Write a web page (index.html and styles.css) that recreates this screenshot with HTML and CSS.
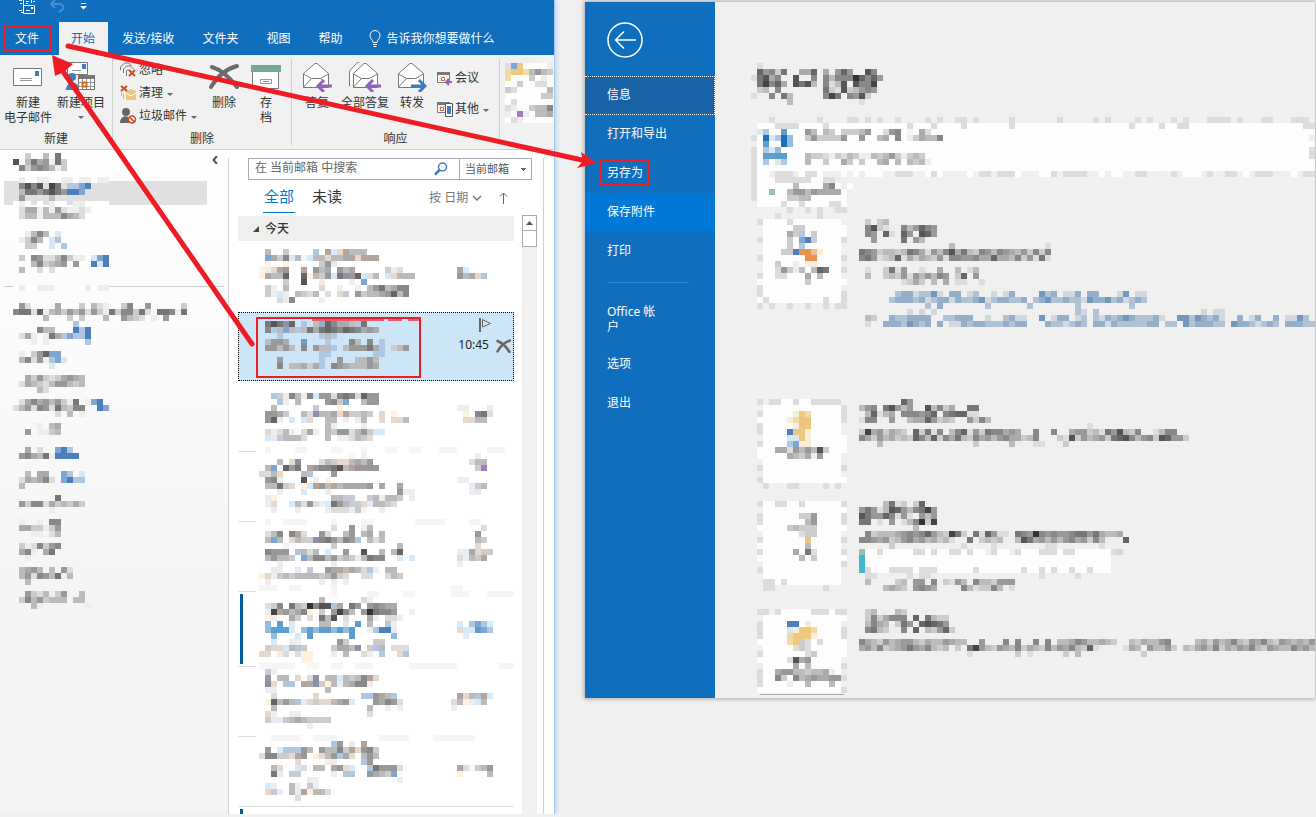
FILE: index.html
```html
<!DOCTYPE html>
<html lang="zh-CN">
<head>
<meta charset="utf-8">
<title>Outlook</title>
<link rel="stylesheet" href="styles.css">
</head>
<body>
<div class="desktop">
  <section class="window outlook">
    <header class="titlebar">
      <div class="quick">
        <button class="plain" aria-label="发送/接收所有文件夹"><svg width="18" height="14" viewBox="0 0 18 14" fill="none" stroke="#fff"><path d="M5.500 6.500V-1M1 .5h3M2 3.500h2M3 12.500h2M1 10.500h3M13.500-1v4M5.500 5.500h11v8h-11zM8 10.500h4M8 1.500h3M8 3.500h2M15 1.500h2"/><path d="M13 7h2v2h-2z" fill="#fff" stroke="none"/></svg></button>
        <button class="plain" aria-label="撤消"><svg width="16" height="14" viewBox="0 0 16 14" fill="none" stroke="#4690d2" stroke-width="2"><path d="M1 4h8c4 0 5 3 4 5l-4 3M5 0L1 4l4 4"/></svg></button>
        <button class="plain" aria-label="自定义"><svg width="8" height="14" viewBox="0 0 8 14"><path d="M1 3h5v1H1zM0 6h7L3.500 9.500z" fill="#fff"/></svg></button>
      </div>
      <nav class="tabs">
        <button class="tab file">文件</button>
        <button class="tab active">开始</button>
        <button class="tab">发送/接收</button>
        <button class="tab">文件夹</button>
        <button class="tab">视图</button>
        <button class="tab">帮助</button>
        <button class="tab tell"><svg width="12" height="18" viewBox="0 0 12 18" fill="none" stroke="#fff"><path d="M4 12.500c0-3-3-3.500-3-7a5 5 0 0 1 10 0c0 3.500-3 4-3 7zM4 14.500h4M4.500 16.500h3"/></svg>告诉我你想要做什么</button>
      </nav>
    </header>

    <div class="ribbon">
      <div class="group g-new">
        <div class="tools">
          <button class="big wide"><svg width="30" height="30" viewBox="0 0 30 30"><path d="M.5 6.500h28v17H.5z" fill="#fff" stroke="#777"/><path d="M22 9h4v5h-4z" fill="#3f7cbc"/><path d="M7 16.500h12M7 18.500h12" stroke="#999"/></svg>新建<br>电子邮件</button>
          <button class="big"><svg width="30" height="30" viewBox="0 0 30 30"><path d="M1.500.5h20v12h-20z" fill="#fff" stroke="#777"/><path d="M16 2h4v5h-4z" fill="#3f7cbc"/><path d="M6 8.500h9" stroke="#999"/><circle cx="6" cy="15" r="4" fill="#3f7cbc"/><path d="M0 28c0-10 13-10 13 0z" fill="#3f7cbc"/><path d="M12.500 13.500h16v14h-16z" fill="#fff" stroke="#777"/><path d="M12 13h17v4H12z" fill="#777"/><path d="M13 20.500h15M13 24.500h15M16.500 17v10M20.500 17v10M24.500 17v10" stroke="#999"/><path d="M16.500 20.500h4v4h-4z" fill="#fff" stroke="#d8661c" stroke-width="2"/></svg>新建项目<i class="caret"></i></button>
        </div>
        <span class="caption">新建</span>
      </div>
      <div class="group g-del">
        <div class="tools">
          <div class="smalls">
            <button class="small"><svg width="17" height="16" viewBox="0 0 17 16" fill="none" stroke="#777"><path d="M.5 8V5l4-4h4l3 3M3.500 11V7l3-3h4l3 3M6.500 14V9l2-2"/><path d="M9 8l6 6M15 8l-6 6" stroke="#cf4b2a" stroke-width="2"/></svg>忽略</button>
            <button class="small"><svg width="17" height="16" viewBox="0 0 17 16" fill="none"><path d="M1.500 7v4M3.500 9v5" stroke="#d9b06a"/><path d="M6 6l5-2 5 2v9H6z" fill="#edc57c"/><path d="M6 8l5 3 5-3" stroke="#fff"/><path d="M1 1l6 5M7 1L1 6" stroke="#cf4b2a" stroke-width="2"/></svg>清理<i class="caret"></i></button>
            <button class="small"><svg width="17" height="16" viewBox="0 0 17 16"><circle cx="6" cy="4" r="4" fill="#666"/><path d="M0 15c0-9 11-9 11 0z" fill="#666"/><circle cx="12" cy="11.500" r="3.500" fill="#f1f1f1" stroke="#cf4b2a" stroke-width="1.500"/><path d="M9.500 9l5 5" stroke="#cf4b2a" stroke-width="1.500"/></svg>垃圾邮件<i class="caret"></i></button>
          </div>
          <button class="big del"><svg width="30" height="30" viewBox="0 0 30 30" fill="none" stroke="#6b6b6b" stroke-linecap="round"><path d="M3 5c10 3 18 11 25 20" stroke-width="4"/><path d="M2 25C8 15 17 7 28 4" stroke-width="4"/></svg>删除</button>
          <button class="big arch"><svg width="30" height="30" viewBox="0 0 30 30"><path d="M1.500 8.500h26v18h-26z" fill="#fff" stroke="#777"/><path d="M0 3h30v7H0z" fill="#76a797"/><path d="M9.500 17.500h11v4h-11z" fill="#fff" stroke="#999"/><path d="M12 19.500h6" stroke="#999"/></svg>存<br>档</button>
        </div>
        <span class="caption">删除</span>
      </div>
      <div class="group g-reply">
        <div class="tools">
          <button class="big"><svg width="30" height="30" viewBox="0 0 30 30" fill="none" stroke="#777"><path d="M1.500 11.500L13 1.500h2l11.500 10v14h-25z" fill="#fff"/><path d="M1.500 12l8 4.500h9l8-4.500M1.500 25l8-8.500M18.500 16.500l4 4"/><path d="M30 24H17M22 18l-6 6 6 6" stroke="#9263b8" stroke-width="3"/></svg>答复</button>
          <button class="big all"><svg width="34" height="30" viewBox="0 0 34 30" fill="none" stroke="#777"><path d="M1.500 24V9L10 0h2M5.500 11.500L16 1.500h2l11.500 10v14h-24z" fill="#fff"/><path d="M5.500 12l8 4.500h8l8-4.500M5.500 25l8-8.500"/><path d="M33 24H20M25 18l-6 6 6 6" stroke="#9263b8" stroke-width="3"/></svg>全部答复</button>
          <button class="big"><svg width="30" height="30" viewBox="0 0 30 30" fill="none" stroke="#777"><path d="M1.500 11.500L13 1.500h2l11.500 10v14h-25z" fill="#fff"/><path d="M1.500 12l8 4.500h9l8-4.500M1.500 25l8-8.500"/><path d="M14 24h13M22 18l6 6-6 6" stroke="#3f7cbc" stroke-width="3"/></svg>转发</button>
          <div class="smalls pair">
            <button class="small"><svg width="16" height="16" viewBox="0 0 16 16"><path d="M.5 2.500h12v10H.5z" fill="#fff" stroke="#777"/><path d="M0 2h13v3H0z" fill="#777"/><path d="M3 6v6M7 6v6M10 6v6" stroke="#aaa" stroke-dasharray="1"/><path d="M4.500 7.500h3v3h-3z" fill="#fff" stroke="#d8661c"/><path d="M15 12H9M12 9l-3 3 3 3" fill="none" stroke="#9263b8" stroke-width="2"/></svg>会议</button>
            <button class="small"><svg width="16" height="16" viewBox="0 0 16 16"><path d="M.5 1.500h12v10H.5z" fill="#fff" stroke="#777"/><path d="M0 1h13v3H0z" fill="#777"/><path d="M3 5v6M7 5v6" stroke="#aaa" stroke-dasharray="1"/><path d="M3.500 6.500h3v3h-3z" fill="#fff" stroke="#d8661c"/><path d="M8.500 2.500h7v13h-7z" fill="#fff" stroke="#555"/><path d="M10 5h4v8h-4z" fill="#3f7cbc"/></svg>其他<i class="caret"></i></button>
          </div>
        </div>
        <span class="caption">响应</span>
      </div>
      <svg class="mosaic ribbon-mosaic" data-mosaic="ribbon"></svg>
    </div>

    <div class="workspace">
      <nav class="tree">
        <button class="plain collapse" aria-label="折叠"><svg width="6" height="8" viewBox="0 0 6 8" fill="none" stroke="#555" stroke-width="2"><path d="M5 0L1.500 4 5 8"/></svg></button>
        <ul class="folders">
          <li><svg class="mosaic" data-mosaic="f0"></svg></li>
          <li class="selected"><svg class="mosaic" data-mosaic="f1"></svg></li>
          <li><svg class="mosaic" data-mosaic="f2"></svg></li>
          <li><svg class="mosaic" data-mosaic="f3"></svg></li>
          <li><svg class="mosaic" data-mosaic="f4"></svg></li>
          <li class="rule"><svg class="mosaic" data-mosaic="f5"></svg></li>
          <li><svg class="mosaic" data-mosaic="f6"></svg></li>
          <li><svg class="mosaic" data-mosaic="f7"></svg></li>
          <li><svg class="mosaic" data-mosaic="f8"></svg></li>
          <li><svg class="mosaic" data-mosaic="f9"></svg></li>
          <li><svg class="mosaic" data-mosaic="f10"></svg></li>
          <li><svg class="mosaic" data-mosaic="f11"></svg></li>
          <li><svg class="mosaic" data-mosaic="f12"></svg></li>
          <li><svg class="mosaic" data-mosaic="f13"></svg></li>
          <li><svg class="mosaic" data-mosaic="f14"></svg></li>
          <li><svg class="mosaic" data-mosaic="f15"></svg></li>
          <li><svg class="mosaic" data-mosaic="f16"></svg></li>
          <li><svg class="mosaic" data-mosaic="f17"></svg></li>
          <li><svg class="mosaic" data-mosaic="f18"></svg></li>
        </ul>
      </nav>
      <main class="mail">
        <form class="search">
          <input type="text" aria-label="搜索" placeholder="在 当前邮箱 中搜索">
          <button type="button" class="plain lens" aria-label="搜索"><svg width="14" height="14" viewBox="0 0 14 14" fill="none" stroke="#3f7cbc"><circle cx="8.500" cy="5" r="4" stroke-width="1.500"/><path d="M5.500 8L1 12.500" stroke-width="2.500"/></svg></button>
          <select aria-label="搜索范围"><option>当前邮箱</option></select>
        </form>
        <div class="filters">
          <button class="filter on">全部</button>
          <button class="filter">未读</button>
          <button class="sort">按 日期 <svg width="10" height="6" viewBox="0 0 10 6" fill="none" stroke="#777" stroke-width="1.500"><path d="M1 1l4 4 4-4"/></svg></button>
          <button class="sort up" aria-label="升序"><svg width="9" height="12" viewBox="0 0 9 12" fill="none" stroke="#666"><path d="M4.500 12V1M1 4.500L4.500 1 8 4.500"/></svg></button>
        </div>
        <div class="scroller">
          <div class="messages">
            <h2 class="day"><svg width="6" height="6" viewBox="0 0 6 6"><path d="M6 0v6H0z" fill="#444"/></svg>今天</h2>
            <ul>
              <li><svg class="mosaic" data-mosaic="m1"></svg></li>
              <li class="selected">
                <div class="marked"><svg class="mosaic" data-mosaic="m2"></svg></div>
                <div class="meta">
                  <button class="plain" aria-label="标记"><svg width="13" height="14" viewBox="0 0 13 14" fill="none" stroke="#666"><path d="M1 0v14" stroke-width="2"/><path d="M3.500 1.500l8 4-8 3.500z"/></svg></button>
                  <time>10:45</time>
                </div>
                <button class="plain remove" aria-label="删除"><svg width="15" height="14" viewBox="0 0 15 14" fill="none" stroke="#666" stroke-linecap="round"><path d="M1.500 2c5 2 9 6 12 11M1.500 12.500C4 8 9 3 14 1.500" stroke-width="2.500"/></svg></button>
              </li>
              <li><svg class="mosaic" data-mosaic="m3"></svg></li>
              <li><svg class="mosaic" data-mosaic="m4"></svg></li>
              <li><svg class="mosaic" data-mosaic="m5"></svg></li>
              <li class="unread"><svg class="mosaic" data-mosaic="m6"></svg></li>
              <li><svg class="mosaic" data-mosaic="m7"></svg></li>
              <li class="full"><svg class="mosaic" data-mosaic="m8"></svg></li>
              <li class="unread"></li>
            </ul>
          </div>
          <div class="scrollbar"><button class="step" aria-label="向上滚动"><svg width="7" height="4" viewBox="0 0 7 4"><path d="M0 4L3.500 0 7 4z" fill="#555"/></svg></button><div class="thumb"></div></div>
        </div>
      </main>
    </div>
  </section>

  <section class="window backstage">
    <nav class="side">
      <button class="plain back" aria-label="返回"><svg width="36" height="36" viewBox="0 0 36 36" fill="none" stroke="#fff" stroke-width="1.500"><circle cx="18" cy="18" r="17"/><path d="M29 18H9M17 9.500L8.500 18l8.500 8.500"/></svg></button>
      <button class="entry current">信息</button>
      <button class="entry">打开和导出</button>
      <button class="entry"><span class="boxed">另存为</span></button>
      <button class="entry hover">保存附件</button>
      <button class="entry">打印</button>
      <hr>
      <button class="entry office">Office 帐户</button>
      <button class="entry">选项</button>
      <button class="entry">退出</button>
    </nav>
    <main class="info">
      <svg class="mosaic title" data-mosaic="title"></svg>
      <svg class="mosaic" data-mosaic="account"></svg>
      <svg class="mosaic" data-mosaic="add"></svg>
      <article class="row r1"><svg class="mosaic" data-mosaic="t1"></svg><svg class="mosaic" data-mosaic="x1"></svg></article>
      <article class="row r2"><svg class="mosaic" data-mosaic="t2"></svg><svg class="mosaic" data-mosaic="x2"></svg></article>
      <article class="row r3"><svg class="mosaic" data-mosaic="t3"></svg><svg class="mosaic" data-mosaic="x3"></svg></article>
      <article class="row r4"><svg class="mosaic" data-mosaic="t4"></svg><svg class="mosaic" data-mosaic="x4"></svg></article>
    </main>
  </section>
</div>

<svg class="arrows" width="620" height="360" viewBox="0 0 620 360" fill="#ee1c25" stroke="#ee1c25" stroke-linecap="round">
  <path d="M252 344L64 73" stroke-width="5"/>
  <path d="M52 55l3 21 9-4 9-8z" stroke="none"/>
  <path d="M68 46l514 114" stroke-width="5"/>
  <path d="M597 163l-16-11 2 9-6 7z" stroke="none"/>
</svg>
<script src="mosaic.js"></script>
</body>
</html>
```
FILE: styles.css
```css
* { box-sizing: border-box; }
body {
  margin: 0;
  background: #f0f0f0;
  font: 12px/16px "Noto Sans", "Noto Sans CJK SC", sans-serif;
  color: #333;
  overflow: hidden;
}
ul { list-style: none; margin: 0; padding: 0; }
button, input, select { font: inherit; color: inherit; margin: 0; }
button { background: none; border: 0; padding: 0; white-space: nowrap; }
svg { display: block; flex: none; }
.plain { line-height: 0; }

.desktop { position: relative; display: flex; align-items: flex-start; gap: 31px; }

/* Mail window */
.outlook {
  flex: 0 0 554px;
  height: calc(100vh - 3px);
  display: flex;
  flex-direction: column;
  background: #fff;
  box-shadow: 0 0 0 1px #a3c7f5, 1px 1px 5px 1px #b9cfee;
  overflow: hidden;
}
.titlebar { background: #106ebe; color: #fff; }
.quick { display: flex; gap: 14px; height: 22px; padding-left: 18px; align-items: flex-start; }
.tabs { display: flex; height: 33px; }
.tab { padding: 0 14px; }
.tab.file { margin: 3px 8px 3px 4px; padding: 0 10px 0 9px; border: 2px solid #ee1c25; }
.tab.active { background: #f1f1f1; color: #106ebe; padding: 0 13px 0 12px; }
.tab.tell { display: flex; align-items: center; gap: 6px; padding-left: 12px; }

.ribbon { display: flex; height: 95px; background: #f1f1f1; border-bottom: 1px solid #d0d0d0; }
.group { display: flex; flex-direction: column; margin: 4px 0; border-right: 1px solid #d0d0d0; }
.g-new { width: 113px; }
.g-del { width: 179px; }
.g-reply { width: 208px; }
.tools { display: flex; flex: 1; }
.caption { text-align: center; margin-bottom: -2px; }
.big { display: flex; flex-direction: column; align-items: center; width: 50px; line-height: 15px; padding-top: 3px; }
.big svg { margin-bottom: 3px; }
.big.wide { width: 56px; }
.big.del { width: 46px; margin-left: 10px; }
.big.arch { width: 38px; }
.big.all { width: 46px; }
.g-reply .big:last-of-type { width: 48px; }
.caret { width: 0; height: 0; margin-top: 2px; border: 3px solid transparent; border-top-color: #666; border-bottom: 0; display: block; }
.g-new .caret { margin-top: 6px; }
.smalls { display: flex; flex-direction: column; gap: 7px; width: 78px; padding: 3px 0 0 7px; }
.small { display: flex; align-items: center; gap: 2px; height: 16px; }
.small .caret { margin-left: 2px; }
.pair { gap: 15px; padding: 11px 0 0 1px; width: 60px; }
.ribbon-mosaic { margin: 2px 0 0 5px; }

.workspace { flex: 1; display: flex; min-height: 0; }
.tree { position: relative; width: 228px; padding-top: 7px; background: linear-gradient(#fff, #fafafa 220px, #f3f3f3 500px); }
.collapse { position: absolute; top: 6px; right: 10px; }
.folders li { display: flex; align-items: flex-start; height: 24px; padding-left: 13px; }
.folders .mosaic { margin-top: -4px; }
.folders .selected { margin: 0 21px 0 4px; padding-left: 9px; background: #e0e0e0; }
.folders .rule { margin: 0 4px; padding-left: 9px; background: linear-gradient(#d0d0d0, #d0d0d0) 0 9px / 100% 1px no-repeat; }

.mail { flex: 1; display: flex; flex-direction: column; margin: 8px 10px 0 0; border: solid #d0d0d0; border-width: 0 1px; padding: 0 6px 0 9px; min-width: 0; }
.search { display: flex; height: 22px; margin: 0 5px 0 10px; border: 1px solid #a6abb8; }
.search input { flex: 1; min-width: 0; border: 0; padding: 0 0 3px 6px; outline: 0; background: none; }
.search input::placeholder { color: #666; opacity: 1; }
.lens { width: 36px; padding-left: 11px; }
.search select {
  appearance: none;
  width: 72px;
  border: 0;
  border-left: 1px solid #a6abb8;
  border-radius: 0;
  padding: 0 0 0 5px;
  font-size: 11px;
  color: #555;
  background: linear-gradient(#666, #666) 61px 9px / 5px 1px no-repeat, linear-gradient(#666, #666) 62px 10px / 3px 1px no-repeat, linear-gradient(#666, #666) 63px 11px / 1px 1px no-repeat;
}
.filters { display: flex; align-items: center; height: 35px; padding-left: 25px; }
.filter { height: 32px; margin-right: 16px; padding: 0 1px 2px; font-size: 15px; line-height: 30px; }
.filter.on { color: #0078d7; background: linear-gradient(#0078d7, #0078d7) 0 100% / 100% 1px no-repeat; }
.filter { margin-top: -2px; }
.sort { display: flex; align-items: center; gap: 4px; margin-left: 70px; color: #777; }
.sort.up { margin-left: 17px; }
.scroller { flex: 1; display: flex; justify-content: space-between; min-height: 0; }
.messages { width: 276px; padding-top: 1px; overflow: hidden; }
.day { display: flex; align-items: center; gap: 6px; height: 25px; margin: 0; padding-left: 15px; background: #efefef; font-size: 12px; font-weight: 500; }
.messages li { position: relative; height: 70px; padding-left: 21px; background: linear-gradient(#ddd, #ddd) 0 100% / 18px 1px no-repeat; }
.messages li:nth-child(1) { height: 71px; padding-top: 8px; background: none; }
.messages li:nth-child(3) { height: 71px; padding-top: 12px; }
.messages li:nth-child(4) { padding-top: 1px; }
.messages li:nth-child(5) { padding-top: 3px; }
.messages li:nth-child(6) { height: 75px; padding-top: 5px; }
.messages li:nth-child(7) { padding-top: 2px; }
.messages li:nth-child(8) { padding-top: 4px; }
.messages li.full { background-size: 100% 1px; }
.messages .unread::before { content: ""; position: absolute; left: 2px; top: 2px; bottom: 3px; width: 3px; background: #005a9e; }
.messages li.selected { display: flex; height: 69px; padding: 4px 0 2px 17px; background: #cde6f7; border: 1px dotted #000; }
.marked { flex: none; width: 165px; height: 61px; padding: 2px 1px; border: 2px solid #ee1c25; background: linear-gradient(90deg, transparent 54px, #e8606c 54px 126px, transparent 126px 130px, #e8606c 130px 144px, transparent 144px 150px, #e8606c 150px) 0 0 / 100% 2px no-repeat; }
.meta { flex: none; display: flex; flex-direction: column; align-items: flex-end; width: 68px; gap: 5px; }
.meta .plain { margin: 1px -3px 0 0; }
.meta time { color: #222; }
.remove { flex: none; margin-left: 7px; align-self: flex-start; padding-top: 22px; }
.scrollbar { width: 15px; background: #f1f1f1; }
.step, .thumb { display: flex; align-items: center; justify-content: center; width: 15px; height: 16px; border: 1px solid #ababab; background: #fff; }
.thumb { height: 17px; margin-top: -1px; }

/* File menu window */
.backstage {
  flex: 1;
  display: flex;
  min-width: 0;
  margin: 2px 1px 0 0;
  background: #f0f0f0;
  box-shadow: 0 0 4px 1px #aaa;
  overflow: hidden;
}
.side { width: 130px; flex: none; background: #106ebe; color: #fff; }
.back { margin: 20px 0 18px 22px; display: block; }
.entry { display: flex; align-items: center; width: 100%; height: 39px; padding: 0 0 2px 22px; }
.entry.current { background: #1763a6; border: 1px dotted #fff; border-left: 0; outline: 0; }
.entry.hover { background: #0078d7; }
.entry.office { height: 53px; padding: 0 56px 0 22px; white-space: normal; text-align: left; line-height: 15px; }
.boxed { margin-left: -7px; padding: 3px 5px; border: 2px solid #ee1c25; }
.side hr { height: 1px; border: 0; margin: 11px 26px 9px 22px; background: #2b88d8; }
.info { flex: 1; min-width: 0; overflow: hidden; padding: 61px 0 3px 36px; }
.title { margin-bottom: 12px; }
.row { display: flex; align-items: flex-start; gap: 12px; padding-left: 6px; }
.r1 { height: 180px; }
.r2 { height: 102px; }
.r3 { height: 108px; }
.r4 { height: 86px; background: linear-gradient(#aaa, #aaa) 9px 100% / 84px 1px no-repeat; }

.arrows { position: absolute; top: 0; left: 0; pointer-events: none; }
```
FILE: mosaic.js
```js
// Pixelated previews. Each row is a list of "column:cells" runs, one character per 6px cell.
// Hex digits are greys, other letters come from the palette.
const CELL = 6;
const palette = {
  w: '#fdfdfd', g: '#f5f5f5',
  B: '#4a80bd', C: '#7fa6d2', D: '#afc7e0', E: '#d9e6f3', L: '#1a73b8', K: '#5d9ecf', A: '#93bddd',
  O: '#e8924d', P: '#f0bb93', Y: '#edc77d', Z: '#f3d9a6', X: '#f8eed8', G: '#98c1b3', T: '#3fb9d2',
  M: '#7397bd', N: '#95aeca', Q: '#b1c2d4', R: '#d0d9e2',
  U: '#d5eafa', V: '#b5a49c', W: '#e5d8ce', S: '#8f90a8', H: '#c9c8d6', I: '#e8ebf4', J: '#fff0e0', F: '#a07cbc'
};
const art = {
  ribbon: ['3:ee', '0:dCYwwwwe', '0:ZYYZb9bc', '0:Zwwwcwew', '0:wwcwwddw', '0:cdwwwwwb', '0:wwwwwwcc', '0:wdwwwwww', '0:dewwcbb8', '0:ewFewbba', '0:wdewwwww'],
  f0: ['2:c 5:b 7:7', '0:5.b7a9e7c', '1:8c989bec'],
  f1: ['1:effeeffeefeefee', '1:8585.47 9:DDCB', '1:b7797579 9:BBC', '1:9 6:b'],
  f2: ['0:fef.f.eff.eeffff', '1:daaebe9deede', '1:dbbebbb8abd'],
  f3: ['', '2:eb8b 7:E', '1:ec8b 6:ED', '2:cc 6:E 8:D'],
  f4: ['', '1:c 3:89ddb8cee 13:ECB', '3:b8cba9.9 13:BEB', '1:b 4:d 6:d'],
  f5: ['', '', '0:wewweeewwwwwewee'],
  f6: ['', '1:9d 7:a 11:c 13:bde 18:c8 22:9 28:c', '0:877d6ebac9b9d9ce7c88c7d 24:778e7', '5:b 9:c 11:c 15:b 18:9bcd 23:e 25:9'],
  f7: ['10:D', '4:8bb 10:BDB', '1:dae 5:e7aDCDDB', '3:e 5:e 12:D'],
  f8: ['', '1:e 3:c96CC', '1:b8d9eDCE', '6:E'],
  f9: ['', '2:ac9cdca9ab', '1:dabcdb99bcb', '4:bd'],
  f10: ['', '1:da8a9b9ce7 12:eCB', '0:db9d89d7bc88 14:BC', '7:d 9:b 11:e'],
  f11: ['', '3:ge 6:ba', '2:9 4:eecb'],
  f12: ['', '2:a 4:d 7:CBD', '1:98ab7eBBBB'],
  f13: ['', '2:b 4:aa 8:CD 11:E', '1:daba8d 8:CBDD', '1:b'],
  f14: ['', '7:7', '1:9c88dacbcac', '6:e'],
  f15: ['', '1:e 4:e 6:88', '1:aaccec9', '3:ee 6:db'],
  f16: ['', '1:ced8c98', '1:a8e 5:a7', '2:e'],
  f17: ['', '1:ba9b 6:b 8:9d', '1:b9d89b7eb', '2:b'],
  f18: ['', '2:9cdbec9 11:b', '1:c8b9cbbb 10:bb', '3:be 12:e'],
  m1: ['1:b 4:H 9:D 11:VUWVbbb', '1:Cac8UbgUbbWbbaVWVVV', '1:J 4:J 10:c9I', '0:JeWV9 7:V 9:9ba 13:9bV 21:ced 33:VU', '0:Jabb6 7:6Jbc9U7S96Udb 21:UWbbb 33:9baWD', '4:c 7:5 10:e 15:e 17:C', '1:ce 4:b 10:W 13:e 16:e 18:b97ba88', '1:HeUe 6:bcWb 11:d 13:WH 16:9cbbV96b8', '3:de8 10:e'],
  m2: ['1:757S6 7:D 9:bN68aabD7', '1:8DbCbDb7a7678678a9a', '3:D 10:DbD', '1:b99a 7:M 11:D 15:8b 18:8 20:D', '1:99b9b 7:8 9:9bbD 14:b9997aD 22:cb9', '10:DD 19:DD', '3:9 10:D 13:9 16:bb9b', '3:8 5:bbacaD 12:89abbb9a'],
  m3: ['2:Dce8be8U99d878W699', '3:De 6:b 11:98cC 17:b99', '2:b 9:H 13:J 33:ee 38:I', '1:99aH 7:bdSbbVWVccbc 20:W 22:J 34:J 36:87d', '1:96e 5:U 7:UW 11:bb 14:e 16:eb 20:W 22:WWb 34:WWbb', '11:be 17:e', '1:Wedbe 7:Wae 11:bc99db9cUU', '1:UIHbbbd 11:b 13:eedbcd', '', '1:g 6:gg 12:gg 17:g 21:gg 25:gg 30:ggg 38:ggg'],
  m4: ['15:g 17:e 36:e', '3:b 5:WS 10:dbcWWbVb9 35:dbb', '1:bC 4:697 8:V98875bV9999 36:cF', '0:WdbW 7:bD 12:9', '1:98e 7:5 9:e 11:J 33:ee', '1:bb7cW 7:JUV9bVbaaaa9 20:V 23:V 35:Icb', '3:e 7:U 11:e 23:9ee 35:eI', '1:IJ 12:bbHH 18:Hbebbc 25:e', '1:eW 5:Ubd9deU79bHcWIbbcW', '2:e 6:e 11:edddeHg 20:e', '', '1:g 4:gggg 12:g 17:gg 26:ggggg 35:gg'],
  m5: ['12:d 15:9 17:eb 37:d', '1:db8 5:8Vd 10:9W 14:b9 17:ba 20:b 36:9', '1:bCb 5:WbccS879b89D 18:bWb 36:bH', '4:g 12:c 23:b 36:W', '1:8999 6:Dbdb 11:U 14:9 17:5 20:b 22:b6 33:eIaWcc', '1:b9bbH 7:Cb88b9cbceb788 23:U 25:U 33:debcV', '3:e 12:e 33:e', '2:Ie 6:I 8:H 11:9aVbabWDe 21:bb', '0:JWeHbcbbbbcb9cW 17:dd 21:Wbc', '1:e 10:e 12:e 14:e', '0:ggg 5:gg 12:g 32:gg', '12:g 18:gg 24:gg 32:ggg 38:gggggg'],
  m6: ['10:b 17:We', '1:dc8 5:7bc3855DV 15:79 18:989aa', '1:e4V9ba8J 10:c 12:948b 17:937889 25:e', '1:Je 5:ac 8:d 10:7b5 14:d 18:ae 21:Wde', '1:A.K 5:U 10:bb 14:U 16:K 18:b 21:De 33:U 35:DCDU', '1:AKKKU.AKAKKAKAK 18:eDBBI 33:WUUKCD', '2:A 6:U 8:K 15:K 22:A 34:I', '2:U 5:ee 13:9c 19:cc', '1:cWWUbDc 12:caabS 18:cDb 22:Wdd', '0:WW.eW 6:dJJ 12:e.b 17:We 20:D 23:WD', '7:JJ', '0:gggggg 8:gg 12:gg 16:ggg 25:gggggggg 40:ggg'],
  m7: ['1:He', '1:9 3:bb 6:W 8:dS 11:bbUbcb8VW', '1:SW 4:DD 7:VaScJbeba88e', '1:ee 11:b', '2:W 9:W 17:DD9VbD 33:VWbDVU', '1:J6b9bDIWcWWba9U 19:9a89d 32:dbJeUb', '2:b 18:b 21:e 23:e 32:e', '1:We 5:ee 18:d', '1:cIIHbabHccc', '8:e', '', '2:gggg 6:g 9:gggg 20:ggggg 29:ggggggg'],
  m8: ['12:D9 15:e 17:V', '1:9 3:UDDD9b 10:9bb8cVW98c', '0:d88ccWV9 9:JWb9DaW 17:b9b', '6:W 11:ee 17:D9', '2:bW 6:Ud 9:bb 12:V9WU 18:D7999d 33:aWgcb9', '2:7I 5:cc 12:e 14:DD 18:9abcC 33:J 38:b', '8:ee 23:e', '1:Ue 5:be 8:He', '1:WHI 5:bIVJbbd', '6:d'],
  title: ['1:d 3:e', '1:698c7 8:aa6 12:ae969 19:58', '0:d75a8 7:5..8 12:8b888368 20:69', '1:7486a 7:575b 12:8db5e5884', '1:cb 4:8 12:7cd5cb989', '0:d 3:8 5:7b 12:847 16:895c', '6:b 16:e 18:d'],
  account: [
    '3:d 11:d 16:dd 19:d 21:d 24:d 29:d 31:d 34:dd 37:d 43:d 51:d 57:d 59:d 64:d 66:d 70:d 72:d 76:dddd 81:d 85:dd 90:ddd',
    '1:wwwdddd 12:d 26:d 30:d 35:d 43:d 63:d 68:d 71:dd 92:dd',
    '1:ED 5:K 9:9b.bc.cccb9 22:d98 26:g 28:ad',
    '0:d 2:LEDLA 9:c9cccc9 18:9 21:ba 24:8 26:ecabb8 93:e',
    '2:K 5:LA', '0:d 2:DEA 93:d', '0:d 2:KKKK 9:bccdecdbceebcb9cecbc 93:d',
    '0:d 2:D 4:ED 9:b 12:c 15:ac 18:c 21:ba 24:b 26:bcbe', '0:d',
    '0:dww.dddewddwee.w.wewww..ddd..wdw.e..w.dd.dddw.e.wwd.dddd..w.ww..dd.ee.d.www.d..dd.w.ddde..w.ddddw'
  ],
  add: ['0:dwwwddddddwwddee', '0:dwwwwwwbwwwwa8wew', '0:dwwGwwb99b9aaaaw', '0:dwwwwwccbbwwwwww', '0:.wwwwdwwdwwwwddw', '0:e 6:d 9:d 11:d 13:edd', '4:d 11:d'],
  t1: ['0:dwwwwdwwwwwwww', '1:wwwwwccwwwwwww', '1:wwwwacDwcwwwww', '0:dwwwwcwCBcwwwwd', '1:wwwwcwDwwwwww', '1:wwwccBOOPXwww', '0:dwwwwwwwOOwwwwd', '1:wwcwweweXwwww', '1:wwd9cebwb67wwd', '0:dwwddwwwawbwww', '0:wwwwwwwwcwwwwww', '0:dwwwwwwwwwwwww', '0:dwwwwwwwwwwwwwd', '0:wdwwwwwwwwwdwwd', '0:d.d..d..d..d.dd'],
  x1: ['1:c.cb', '1:85cde.8b9689', '1:89.6d.69.569', '2:9 7:7 9:9b', '15:b 27:e 31:d', '0:789cbbcb78ad9b85a7bc89b89ab9c8c8', '0:879dcb6dacabc9d88998aa6aab8c9d7d', '', '1:d 4:c7d9 10:de 13:a 16:bedb', '1:b 4:cbc9d9b9b89ec6.9', '7:dcac 12:b 14:a 16:dde 20:d', '',
    '6:QNNRQQMR 15:NN 18:RQ 22:R 24:RN 30:MQN 34:RRN 38:NN 43:RM 46:RR',
    '5:QNNNQNRQNNRNQQNMRQNNQQN 29:QNMQQNQQRMNNMQNRQNQ', '11:Q 13:N 21:Q 28:Q 36:Q 45:Q', '8:R 10:R 12:R 36:QR 39:Q 57:R 59:RR 72:e',
    '1:bc 5:NQQNNNN 14:QQNNN 21:R 24:QNRR 30:M 32:RNN 36:RQ 39:QRNQNMNQQQNR 53:MMQMNQNRe 63:N.RN 69:N.RRMQ',
    '1:d 4:NNNQMNQN 13:N 15:RR 17:NQNNQQQNQNN 31:NQQRQNQ 39:NNRNQQQQQNN 51:QQ 54:MQNNNQQ 62:MNNQRQNQ 71:NNNQQ'],
  t2: ['0:d.ddwwdwwddddd', '1:wwwwwwwwwwwwwd', '0:dwwwwwXYZwwwwwd', '0:wwwwwXZYYwwwwwd', '0:dwwwwwXYYwwwww', '0:dwwwwBYYXwwwww', '1:wwwwEEYXwwwwww', '0:dwwwwDCXXwwwwww', '0:wwwaad9b9b5cwww', '0:wwwwwabcae9www', '1:wwwwwwwwwwwwwe', '0:dwwwwwwwwwwwwwd', '0:ewwwwwwwwwwwww', '0:dwwwwwwwwwwwwww', '1:d 5:dd 11:d 13:d'],
  x2: ['7:69 20:e', '0:b98e759b9e.5b8ca 18:77', '1:b6dbae888986.8766 18:dd', '0:d88e.9 8:baa69cbc 18:9c8b', '38:d', '0:c4a9cabce6c7d8eb86d9c788a9a 29:8 32:8 35:a99cbd795bc8 49:db88', '0:8ac9bacbc68b6c8a7bc8a9b98aacb8 33:cd5c9ba9c7658b98c 50:5699c', '3:b 19:c 25:b 29:dd 34:c'],
  t3: ['0:dwwddwwdwwwwwwd', '1:wwwwwwwwwwwwww', '0:dwwwwwwcc9wwwwd', '0:dwwwwwwwb9wwwwd', '0:wwwwwcbcccwwwww', '1:wwwwwwdccwwww', '0:dwwwwwwwYwwwwwd', '0:wwwwwwwwbwwwww', '0:dwwwwwaw7dwwwwd', '0:wwwwwwwbwcwwwww', '1:wwwwwwwwwwwwwd', '0:dwwwwwwwwwwwww', '1:wwwwwwwwwwwww', '1:ddwdwwwwwwwww', '1:dd 11:d'],
  x3: ['4:b7dc 9:c6', '0:979db569b8749', '0:57996 5:8d9d.9b9', '0:77.d.9.db83c4', '9:b 23:e', '1:8cbbba98986 12:9bc47c 19:7d69dd 26:78938989987797abba', '0:889a9cb98a9bacbd 18:7.cbcb 26:b57a9b9b98a9c8be 44:6', '5:c 17:d 22:d 31:dd 40:d',
    '0:GwwdwwwwwddwdwwddwdwwedwwedwwwdddwddwwwwwwdR', '0:Twwwwwwwwwwwwwwwwwwwwwwwwwwwwwwwwwwwwwwwww', '0:Twwwwwwwwwwwwwwwwwwwwwwwwwwwwwwwwwwwwwwwww', '0:Tdwwwddddwdddwwwwwwdwwwwwwwdwwdwdwwdwwdwww',
    '1:dd 8:d 10:dd 30:d 36:d', '1:b 6:cb.99.8 14:cd9b.8bbc999', '4:babce989a 17:8bdcc8bed'],
  t4: ['0:dd.dwwwwwdddwdd', '1:wwwwwwwwwwwwww', '0:dwwwwBBwXwwwww', '0:dwwwwEXYYZwwwwd', '0:dwwwwZYYYXwwwwd', '0:wwwwwZYcdwdwwww', '1:wwwwwdcdwwwwww', '0:dwwwwwwwdcwwwww', '0:wwwwwd5a9wwwww', '0:ewwwwwawbwwwwwd', '0:dwwa99bbcbbaewe', '0:dww8cw8ba9aa99d', '0:dwwwwewwbwwwbw', '0:wwwwwwwwwwwwwwd'],
  x4: ['1:cb 6:bc 12:e', '0:ec8ca888 9:6.7bcc', '1:b8ab.c79.65679', '1:87bc.e8.6.bc96c', '', '0:8abc9ba99bcabb9abb 20:9 24:8 26:8 29:8 31:8 33:bba89bbabc 45:bcabb98 56:bac9ba8bc9a8bc9abab9', '0:a9b8cba979a8bcb 16:c 18:749bc9ab8c 28:abc8b9a8bc6de 44:dab.9bb9c 54:bca9b8cab9a8bc9abb8a9b', '18:d 26:c 28:d 34:c 36:b 47:c']
};

document.querySelectorAll('[data-mosaic]').forEach(svg => {
  const name = svg.dataset.mosaic;
  const rows = art[name];
  const paths = {};
  let cols = 0;
  // The account card has a solid white body under its cells.
  if (name === 'account') paths[palette.w] = `M${CELL} ${CELL}h${93 * CELL}v${8 * CELL}h${-93 * CELL}z`;
  rows.forEach((row, r) => {
    row.split(' ').filter(Boolean).forEach(run => {
      const [start, cells] = run.split(':');
      [...cells].forEach((ch, i) => {
        if (ch === '.') return;
        const c = +start + i;
        const color = palette[ch] || '#' + ch.repeat(3);
        paths[color] = (paths[color] || '') + `M${c * CELL} ${r * CELL}h${CELL}v${CELL}h${-CELL}z`;
        cols = Math.max(cols, c + 1);
      });
    });
  });
  svg.setAttribute('width', cols * CELL);
  svg.setAttribute('height', rows.length * CELL);
  svg.setAttribute('shape-rendering', 'crispEdges');
  svg.innerHTML = Object.entries(paths).map(([c, d]) => `<path fill="${c}" d="${d}"/>`).join('');
});
```
